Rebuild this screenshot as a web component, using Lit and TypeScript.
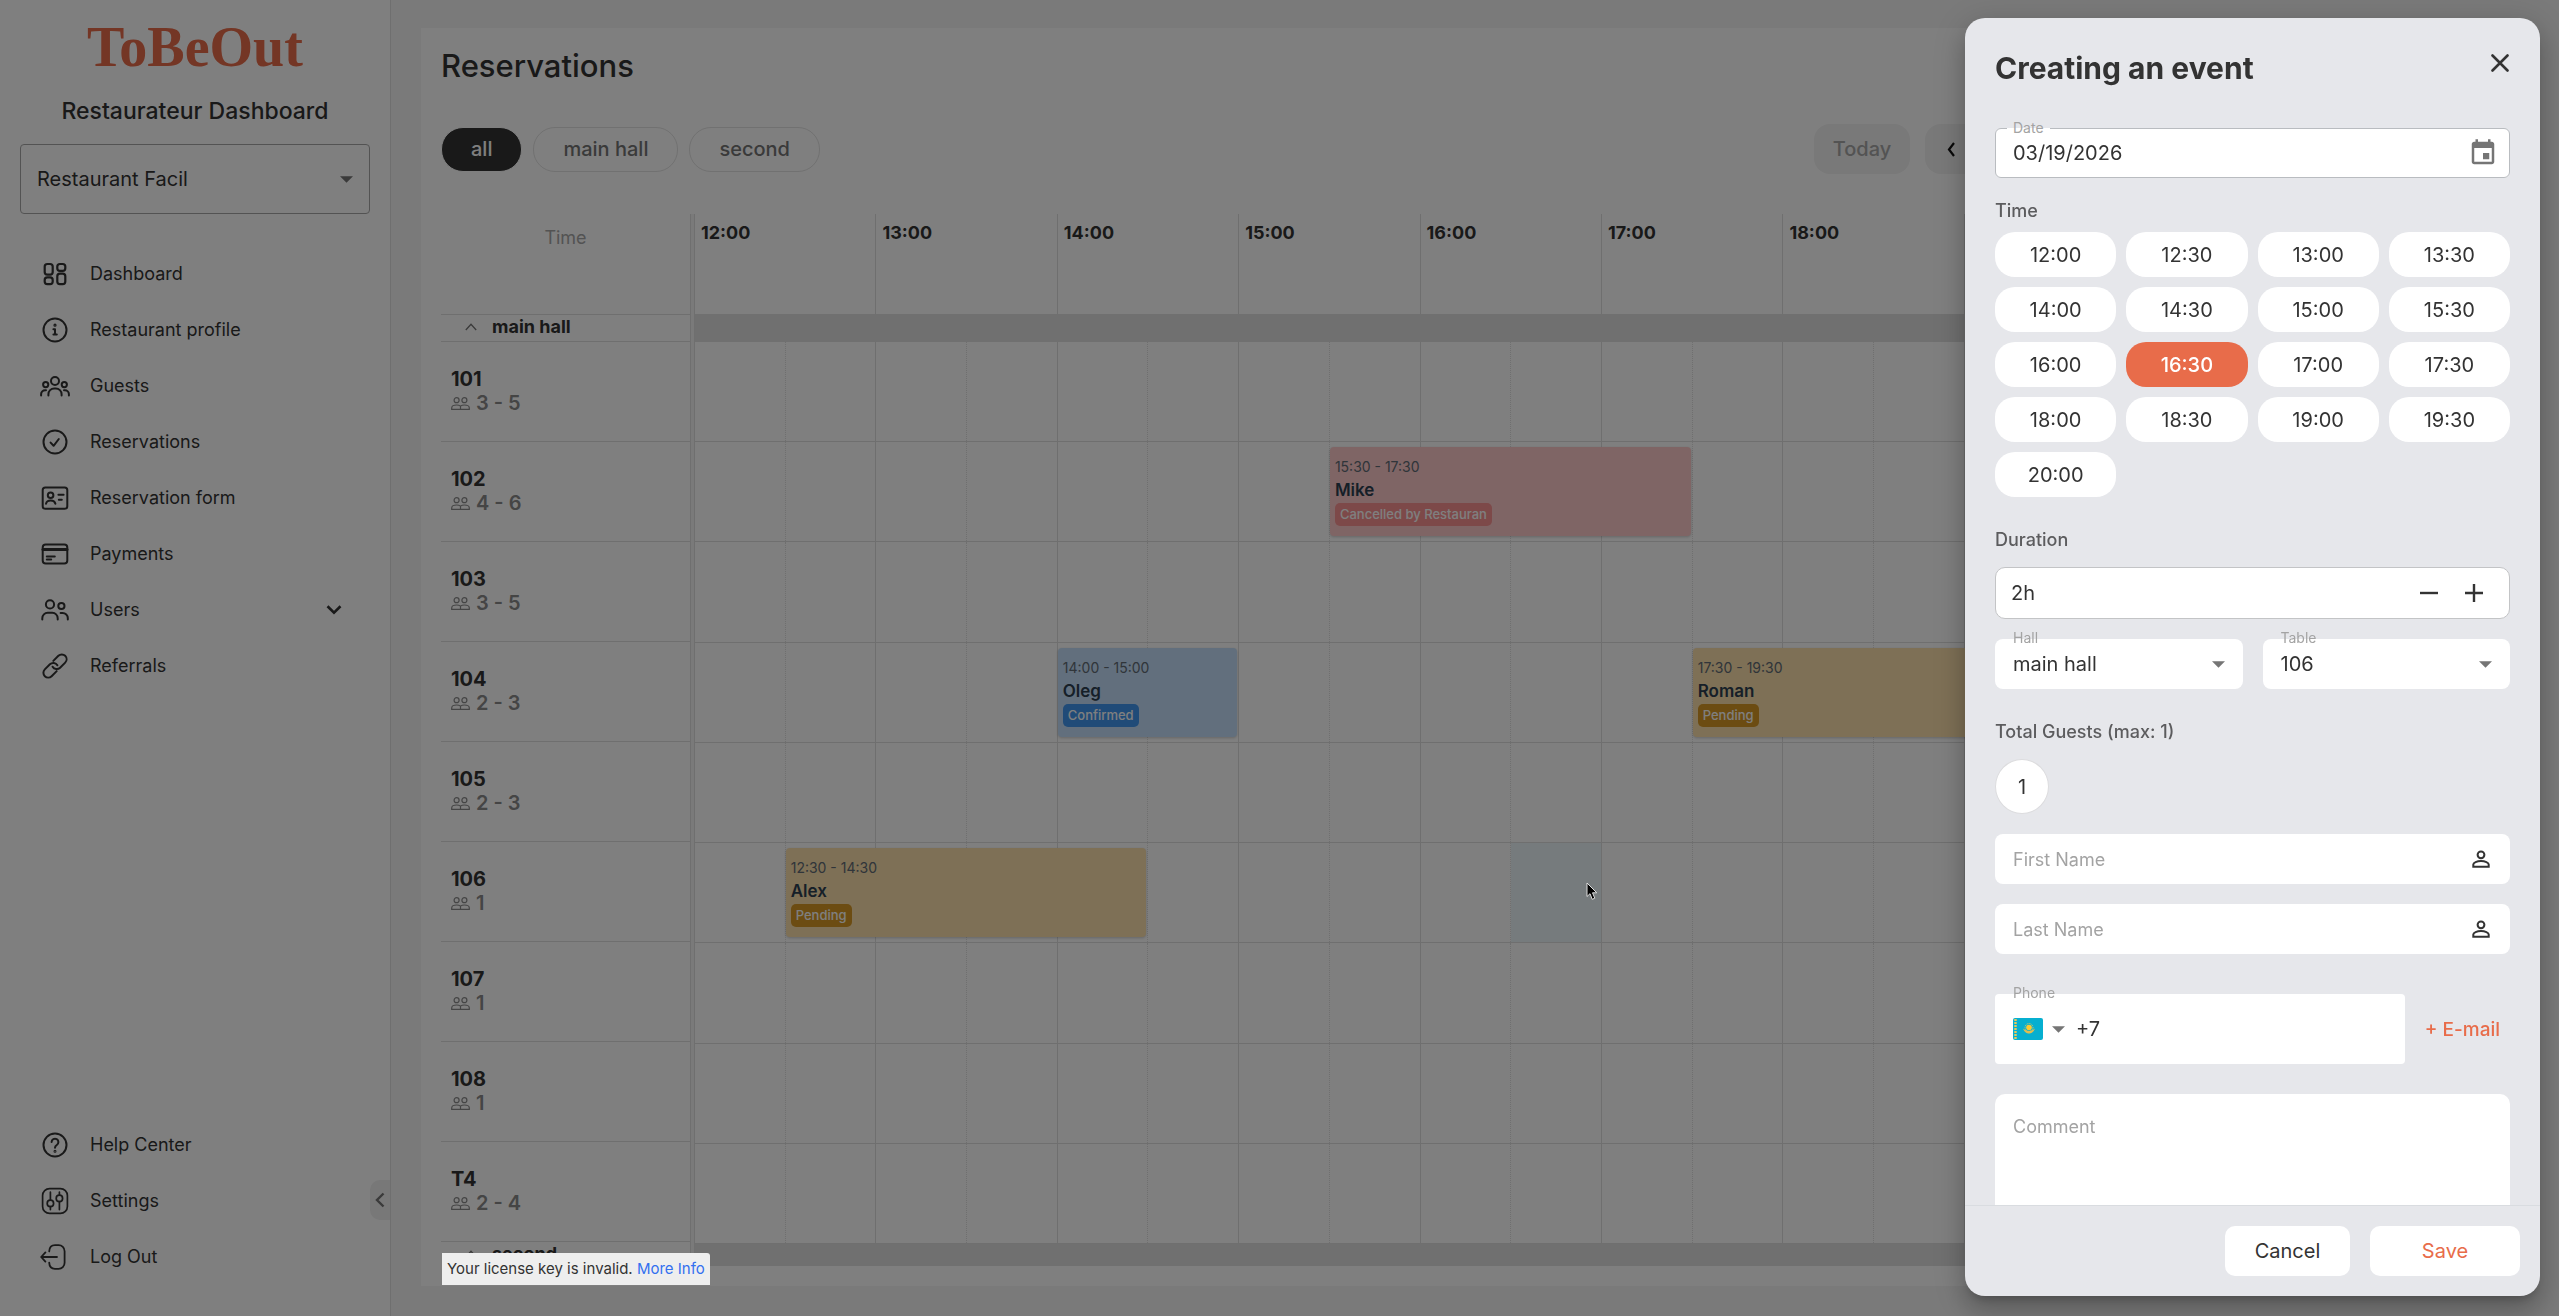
import { LitElement, html, css, svg, nothing } from "lit";
import { customElement, state } from "lit/decorators.js";
import { classMap } from "lit/directives/class-map.js";
import { styleMap } from "lit/directives/style-map.js";

const reset = css`
  *, *::before, *::after { box-sizing: border-box; }
  button, input, select, textarea {
    font: inherit; color: inherit; margin: 0; padding: 0; border: 0;
    background: none; border-radius: 0; outline: none; appearance: none;
  }
  button, select { cursor: pointer; }
  svg { display: block; flex: none; }
  a { color: inherit; text-decoration: none; }
  h1, h2, p, ul { margin: 0; padding: 0; }
  ul { list-style: none; }
`;

const caret = html`<svg class="caret" width="13" height="7" viewBox="0 0 12 6"><path d="M0 0h12L6 6z" fill="#757575" /></svg>`;

const icons: Record<string, unknown> = {
  dashboard: svg`<g stroke-width="2.2"><rect x="4.7" y="5" width="8" height="10.6" rx="2.6"/><rect x="17.3" y="5" width="8" height="6.8" rx="2.6"/><rect x="4.7" y="18.4" width="8" height="6.8" rx="2.6"/><rect x="17.3" y="14.6" width="8" height="10.6" rx="2.6"/></g>`,
  info: svg`<circle cx="15" cy="15" r="11.5"/><path d="M13.4 14.2H15V19.2M13.4 19.6h3.4"/><circle cx="15" cy="10.2" r=".6"/>`,
  guests: svg`<circle cx="15" cy="10" r="4"/><circle cx="5.7" cy="13.6" r="2.6"/><circle cx="24.3" cy="13.6" r="2.6"/><path d="M8.4 24.4v-1.2a5.8 5.8 0 0 1 5.8-5.8h1.6a5.8 5.8 0 0 1 5.8 5.8v1.2M1.1 24.4v-1.2a4 4 0 0 1 4-4h.9M28.9 24.4v-1.2a4 4 0 0 0-4-4H24"/>`,
  check: svg`<circle cx="15" cy="15" r="11.5"/><path d="M10.6 15.6l3 3.2 5.2-6.8"/>`,
  form: svg`<rect x="2.7" y="4.4" width="24.6" height="21.4" rx="2.6"/><circle cx="10.6" cy="12.2" r="2.8"/><path d="M6 20.8a4.8 4 0 0 1 9.4 0M18.4 11.8h5.2M18.8 16.8h3"/>`,
  card: svg`<rect x="2.7" y="5.4" width="24.6" height="19" rx="3"/><path d="M3 10.6h24" stroke-width="3"/><path d="M6.8 17.4h8M6.8 20.4h4.4"/>`,
  users: svg`<circle cx="10" cy="9.4" r="4.1"/><circle cx="21.4" cy="11" r="3.1"/><path d="M2.3 24.6v-1.4a5.4 5.4 0 0 1 5.4-5.4h4.6a5.4 5.4 0 0 1 5.4 5.4v1.4M20.6 17.9h2a5.2 5.2 0 0 1 5.2 5.2v1.5"/>`,
  link: svg`<g transform="rotate(-45 15 15)"><path d="M12.6 19.8H5.400a4.800 4.800 0 0 1-4.800-4.800a4.800 4.800 0 0 1 4.800-4.800h7.200a4.800 4.800 0 0 1 4.600 6"/><path d="M17.400 10.200h7.200a4.800 4.800 0 0 1 4.800 4.800a4.800 4.800 0 0 1-4.800 4.800h-7.200a4.800 4.800 0 0 1-4.600-6"/></g>`,
  help: svg`<circle cx="15" cy="15" r="11.5"/><path d="M11.6 12a3.4 3.4 0 1 1 5.2 3c-1.300.8-1.800 1.400-1.800 2.800"/><circle cx="15" cy="21.200" r=".5"/>`,
  settings: svg`<g stroke-width="1.7"><rect x="2.600" y="2.600" width="24.800" height="24.800" rx="7"/><circle cx="10.400" cy="17.400" r="3.200"/><circle cx="19.400" cy="12.400" r="3.200"/><path d="M10.400 6.200v8M10.400 20.600v3M19.400 6.200v3M19.400 15.600v8"/></g>`,
  logout: svg`<g stroke-width="1.800"><path d="M1.200 15H17M5.400 10.400L1.200 15l4.200 4.600"/><path d="M9.200 9.400C9.400 5.200 11.400 3.200 15 3.200h3.600a6 6 0 0 1 6 6v11.600a6 6 0 0 1-6 6H15c-3.600 0-5.600-2-5.800-6.200"/></g>`,
};

const icon = (name: string) => html`<svg class="icon" width="30" height="30" viewBox="0 0 30 30" fill="none"
  stroke="currentColor" stroke-width="2" stroke-linecap="round" stroke-linejoin="round" aria-hidden="true">${icons[name]}</svg>`;

@customElement("side-bar")
class SideBar extends LitElement {
  static styles = [reset, css`
    :host {
      position: relative; display: flex; flex-direction: column; background: #fff;
      border-right: 1px solid #dfdfdf; padding: 15px 20px 31px; color: #333;
    }
    .logo {
      font: bold 56px/64px "Liberation Serif", "Times New Roman", serif;
      color: #e86c4a; text-align: center;
    }
    .tagline { margin-top: 16px; font-size: 23px; line-height: 32px; font-weight: 500; text-align: center; white-space: nowrap; }
    .venue { position: relative; margin-top: 17px; }
    .venue select { width: 100%; height: 70px; border: 1px solid #a6a6a6; border-radius: 4px; padding: 0 44px 0 16px; font-size: 20px; }
    .caret { position: absolute; right: 17px; top: 32px; pointer-events: none; }
    .menu { margin-top: 32px; }
    .bottom { margin-top: auto; }
    .item { display: flex; align-items: center; gap: 20px; height: 56px; padding: 0 20px; font-size: 18px; line-height: 24px; }
    .more { margin: 0 8px 0 auto; }
    .collapse {
      position: absolute; right: 0; bottom: 96px; width: 20px; height: 40px;
      display: grid; place-items: center; background: #f0f0f0; border-radius: 10px 0 0 10px;
    }
  `];

  private main = [
    ["dashboard", "Dashboard"], ["info", "Restaurant profile"], ["guests", "Guests"], ["check", "Reservations"],
    ["form", "Reservation form"], ["card", "Payments"], ["users", "Users"], ["link", "Referrals"],
  ];
  private extra = [["help", "Help Center"], ["settings", "Settings"], ["logout", "Log Out"]];

  private item([name, label]: string[]) {
    return html`<li><a class="item" href="#">${icon(name)}<span>${label}</span>
      ${name === "users"
        ? html`<svg class="more" width="16" height="10" viewBox="0 0 16 10" fill="none" stroke="currentColor" stroke-width="2.600"><path d="M1.500 1.200L8 7.600l6.500-6.400"/></svg>`
        : nothing}</a></li>`;
  }

  render() {
    return html`
      <div class="logo">ToBeOut</div>
      <p class="tagline">Restaurateur Dashboard</p>
      <div class="venue">
        <select aria-label="Restaurant"><option>Restaurant Facil</option></select>${caret}
      </div>
      <ul class="menu">${this.main.map((i) => this.item(i))}</ul>
      <ul class="bottom">${this.extra.map((i) => this.item(i))}</ul>
      <button class="collapse" aria-label="Collapse">
        <svg width="10" height="16" viewBox="0 0 10 16" fill="none" stroke="#757575" stroke-width="2.400"><path d="M8.500 1.500L2 8l6.500 6.500"/></svg>
      </button>`;
  }
}

interface Booking { start: number; slots: number; time: string; name: string; status: string; tone: string; }
interface Table { id: string; seats: string; bookings?: Booking[]; selected?: number; }

const tables: Table[] = [
  { id: "101", seats: "3 - 5" },
  { id: "102", seats: "4 - 6", bookings: [{ start: 8, slots: 4, time: "15:30 - 17:30", name: "Mike", status: "Cancelled by Restauran", tone: "cancelled" }] },
  { id: "103", seats: "3 - 5" },
  {
    id: "104", seats: "2 - 3", bookings: [
      { start: 5, slots: 2, time: "14:00 - 15:00", name: "Oleg", status: "Confirmed", tone: "confirmed" },
      { start: 12, slots: 4, time: "17:30 - 19:30", name: "Roman", status: "Pending", tone: "pending" },
    ],
  },
  { id: "105", seats: "2 - 3" },
  { id: "106", seats: "1", selected: 10, bookings: [{ start: 2, slots: 4, time: "12:30 - 14:30", name: "Alex", status: "Pending", tone: "pending" }] },
  { id: "107", seats: "1" },
  { id: "108", seats: "1" },
  { id: "T4", seats: "2 - 4" },
];

@customElement("booking-scheduler")
class BookingScheduler extends LitElement {
  static styles = [reset, css`
    :host { display: grid; grid-template-columns: 249px 5px 1fr; min-height: 0; overflow: hidden; color: #333; }
    .resources { display: flex; flex-direction: column; min-height: 0; overflow: hidden; }
    .corner { flex: none; height: 100px; padding-top: 12px; text-align: center; font-size: 18px; line-height: 24px; color: #a6a6a6; }
    .group {
      flex: none; height: 28px; display: flex; align-items: center; gap: 15px; padding: 0 0 3px 24px;
      border-top: 1px solid #dfdfdf; border-bottom: 1px solid #dfdfdf; font-size: 18px; line-height: 22px; font-weight: 700;
    }
    .resource { flex: none; height: 100px; border-bottom: 1px solid #dfdfdf; padding: 25px 10px 0; font-size: 20px; line-height: 24px; }
    .resource + .group { border-top: 0; }
    .id { font-weight: 700; }
    .seats { display: flex; align-items: center; gap: 6px; font-weight: 600; color: #8a8a8a; }
    .divider { background: #f4f4f4; border: 1px solid #dfdfdf; border-width: 0 1px; }
    .timeline { display: grid; grid-template-rows: 100px 28px repeat(9, minmax(0, 1fr)) 22px; min-height: 0; }
    .hours { display: grid; grid-template-columns: repeat(10, 1fr); }
    .hour { border-right: 1px solid #dfdfdf; padding: 7px 6px; font-size: 18px; line-height: 24px; font-weight: 700; }
    .band { background: #e0e0e0; }
    .lane { display: grid; grid-template-columns: repeat(20, 1fr); grid-template-rows: 100%; border-bottom: 1px solid #dfdfdf; min-height: 0; }
    .cell { grid-row: 1; border-right: 1px dotted #dfdfdf; }
    .cell.full { border-right-style: solid; }
    .cell.selected { background: #ecf6fa; }
    .booking {
      grid-row: 1; margin: 5px 2px 5px 0; padding: 9px 5px 0; border-radius: 4px; overflow: hidden;
      display: flex; flex-direction: column; align-items: flex-start; box-shadow: 0 1px 3px rgba(0, 0, 0, .2); white-space: nowrap;
    }
    .when { font-size: 14px; line-height: 22px; color: #606a74; }
    .who { font-size: 17px; line-height: 24px; font-weight: 600; color: #2c3e50; }
    .status { margin-top: 1px; height: 23px; padding: 0 5px; border-radius: 5px; font-size: 13px; line-height: 22px; font-weight: 500; color: #fff; }
    .cancelled { background: #ffcbcb; }
    .cancelled .status { background: #fa9292; }
    .confirmed { background: #c4dffa; }
    .confirmed .status { background: #4096f0; }
    .pending { background: #fde0ac; }
    .pending .status { background: #d89824; }
  `];

  private group(name: string) {
    return html`<div class="group">
      <svg width="12" height="8" viewBox="0 0 12 8" fill="none" stroke="#757575" stroke-width="1.300"><path d="M.8 7L6 1.200 11.200 7"/></svg>
      <span>${name}</span></div>`;
  }

  render() {
    const hours = Array.from({ length: 7 }, (_, i) => `${12 + i}:00`);
    const slots = Array.from({ length: 20 }, (_, i) => i + 1);
    return html`
      <div class="resources">
        <div class="corner">Time</div>
        ${this.group("main hall")}
        ${tables.map((t) => html`<div class="resource">
          <div class="id">${t.id}</div>
          <div class="seats">
            <svg width="19" height="13" viewBox="0 0 19 13" fill="none" stroke="currentColor" stroke-width="1.200">
              <circle cx="5.600" cy="3.200" r="2.500"/><circle cx="13.400" cy="3.200" r="2.500"/>
              <path d="M.7 12.300V11c0-1.700 1.800-3 4.900-3 1.700 0 3 .4 3.900 1.100.9-.7 2.200-1.100 3.900-1.100 3.100 0 4.900 1.300 4.900 3v1.300zM9.500 9.100v3"/>
            </svg>${t.seats}
          </div></div>`)}
        ${this.group("second")}
      </div>
      <div class="divider"></div>
      <div class="timeline">
        <div class="hours">${hours.map((h) => html`<div class="hour">${h}</div>`)}</div>
        <div class="band"></div>
        ${tables.map((t) => html`<div class="lane">
          ${slots.map((n) => html`<div class=${classMap({ cell: true, full: n % 2 === 0, selected: t.selected === n })}
            style=${styleMap({ gridColumn: `${n}` })}></div>`)}
          ${(t.bookings ?? []).map((b) => html`<div class="booking ${b.tone}" style=${styleMap({ gridColumn: `${b.start} / span ${b.slots}` })}>
            <div class="when">${b.time}</div><div class="who">${b.name}</div><div class="status">${b.status}</div>
          </div>`)}
        </div>`)}
        <div class="band"></div>
      </div>`;
  }
}

@customElement("event-drawer")
class EventDrawer extends LitElement {
  static styles = [reset, css`
    :host {
      position: fixed; top: 18px; right: 19px; bottom: 20px; width: 575px; display: flex; flex-direction: column;
      background: #e6e7eb; border-radius: 20px; overflow: hidden; color: #333; font-size: 20px;
      box-shadow: 0 8px 10px -5px rgba(0, 0, 0, .2), 0 16px 24px 2px rgba(0, 0, 0, .14), 0 6px 30px 5px rgba(0, 0, 0, .12);
    }
    .head { flex: none; display: flex; justify-content: space-between; align-items: flex-start; padding: 30px 30px 0; }
    .head h2 { font-size: 30px; line-height: 40px; font-weight: 700; }
    .close { width: 20px; height: 30px; display: grid; place-items: center; }
    .form { flex: 1; min-height: 0; overflow: auto; scrollbar-width: none; padding: 40px 30px 0; }
    .field { position: relative; display: flex; align-items: center; height: 50px; background: #fff; border-radius: 8px; padding: 0 18px; }
    .field input, .field select { flex: 1; min-width: 0; height: 100%; }
    .float { position: absolute; left: 18px; top: -10px; font-size: 14px; line-height: 18px; color: #a3a3a3; }
    .outlined { border: 1px solid #b9bcc0; border-radius: 6px; padding: 0 11px 0 17px; }
    .outlined .float { left: 11px; padding: 0 6px; background: linear-gradient(#e6e7eb 9px, #fff 9px); }
    .caption { display: block; padding-top: 2px; font-size: 18px; line-height: 22px; font-weight: 500; color: #5c5c5e; }
    .stack { margin-top: 20px; }
    .section { margin-top: 30px; }
    .times { display: grid; grid-template-columns: repeat(4, 1fr); gap: 10px; margin-top: 10px; }
    .time { height: 45px; border-radius: 20px; background: #fff; }
    .time.on { background: #e86c4a; color: #fff; font-weight: 500; }
    .duration { height: 52px; margin-top: 16px; border-radius: 10px; border: 1px solid #c3c4c6; padding: 0 15px; gap: 5px; }
    .step { width: 30px; height: 30px; display: grid; place-items: center; }
    .step + .step { margin: 0 5px 0 10px; }
    .pair { display: grid; grid-template-columns: 1fr 1fr; gap: 20px; }
    .caret { pointer-events: none; }
    .pair .field { padding-right: 0; }
    .pair select { padding-right: 36px; margin-right: -36px; }
    .pair .caret { margin-right: 18px; }
    .guest { width: 54px; height: 55px; margin-top: 16px; border-radius: 50%; background: #fff; border: 1px solid #dcdcde; display: block; }
    input::placeholder, textarea::placeholder { color: #a3a3a3; opacity: 1; font-size: 18px; }
    .person { margin: 0 2px; }
    .contact { display: grid; grid-template-columns: minmax(0, 1fr) auto; gap: 20px; align-items: center; margin-top: 40px; padding-right: 10px; }
    .contact .field { height: 70px; border-radius: 4px; gap: 11px; }
    .country { display: flex; align-items: center; gap: 9px; height: 30px; }
    .email { color: #e86c4a; font-size: 19px; font-weight: 500; height: 40px; white-space: nowrap; }
    .comment { display: block; width: 100%; height: 160px; margin-top: 30px; border-radius: 10px; background: #fff; padding: 19px 18px; line-height: 28px; resize: none; }
    .foot { flex: none; display: flex; justify-content: flex-end; gap: 20px; padding: 20px; border-top: 1px solid #d9dce0; }
    .foot button { height: 50px; background: #fff; border-radius: 10px; }
    .cancel { width: 125px; }
    .save { width: 150px; color: #e86c4a; }
  `];

  @state() private selected = "16:30";
  @state() private hours = 2;

  private times = Array.from({ length: 17 }, (_, i) => `${12 + Math.floor(i / 2)}:${i % 2 ? "30" : "00"}`);

  private nameField(id: string, label: string) {
    return html`<div class="field stack">
      <input id=${id} type="text" placeholder=${label} aria-label=${label} />
      <svg class="person" width="18" height="18" viewBox="0 0 18 18" fill="none" stroke="currentColor" stroke-width="2">
        <circle cx="9" cy="4.800" r="3.400"/><path d="M1.300 16.800v-2.200c0-2 3.600-3.600 7.700-3.600s7.700 1.600 7.700 3.600v2.200z"/>
      </svg></div>`;
  }

  render() {
    return html`
      <div class="head">
        <h2>Creating an event</h2>
        <button class="close" aria-label="Close">
          <svg width="18" height="18" viewBox="0 0 18 18" fill="none" stroke="currentColor" stroke-width="2.600" stroke-linecap="round"><path d="M1.500 1.500l15 15M16.500 1.500l-15 15"/></svg>
        </button>
      </div>
      <div class="form">
        <div class="field outlined">
          <label class="float" for="date">Date</label>
          <input id="date" type="text" value="03/19/2026" />
          <button aria-label="Choose date">
            <svg width="30" height="30" viewBox="0 0 24 24" fill="#757575"><path d="M17 12h-5v5h5v-5zM16 1v2H8V1H6v2H5c-1.110 0-1.990.9-1.990 2L3 19c0 1.100.89 2 2 2h14c1.100 0 2-.9 2-2V5c0-1.100-.9-2-2-2h-1V1h-2zm3 18H5V8h14v11z"/></svg>
          </button>
        </div>
        <div class="caption stack">Time</div>
        <div class="times">${this.times.map((t) => html`<button class=${classMap({ time: true, on: t === this.selected })}
          @click=${() => (this.selected = t)}>${t}</button>`)}</div>
        <label class="caption section" for="duration">Duration</label>
        <div class="field duration">
          <input id="duration" type="text" readonly .value=${`${this.hours}h`} />
          <button class="step" aria-label="Shorter" @click=${() => (this.hours = Math.max(1, this.hours - 1))}>
            <svg width="18" height="18" viewBox="0 0 18 18" stroke="currentColor" stroke-width="2.400"><path d="M0 9h18"/></svg>
          </button>
          <button class="step" aria-label="Longer" @click=${() => (this.hours += 1)}>
            <svg width="18" height="18" viewBox="0 0 18 18" stroke="currentColor" stroke-width="2.400"><path d="M0 9h18M9 0v18"/></svg>
          </button>
        </div>
        <div class="pair stack">
          <div class="field"><label class="float" for="hall">Hall</label><select id="hall"><option>main hall</option></select>${caret}</div>
          <div class="field"><label class="float" for="table">Table</label><select id="table"><option>106</option></select>${caret}</div>
        </div>
        <div class="caption section">Total Guests (max: 1)</div>
        <button class="guest">1</button>
        ${this.nameField("first", "First Name")}
        ${this.nameField("last", "Last Name")}
        <div class="contact">
          <div class="field">
            <label class="float" for="phone">Phone</label>
            <button class="country" aria-label="Country">
              <svg width="30" height="22" viewBox="0 0 30 22"><rect width="30" height="22" rx="2" fill="#06afd0"/>
                <path d="M2.500 1v20" stroke="#e8c95a" stroke-width="2.400" stroke-dasharray="2 1"/>
                <circle cx="16" cy="9.500" r="2.800" fill="#fec92f"/><circle cx="16" cy="9.500" r="4" fill="none" stroke="#e8c95a" stroke-width="1" stroke-dasharray="1 1"/>
                <path d="M10 10.500c1.500 4 4 5 6 5s4.500-1 6-5c-2 1.500-4 2.500-6 2.500s-4-1-6-2.500z" fill="#e0bd50"/></svg>
              ${caret}
            </button>
            <input id="phone" type="tel" value="+7" />
          </div>
          <button class="email">+ E-mail</button>
        </div>
        <textarea class="comment" placeholder="Comment" aria-label="Comment"></textarea>
      </div>
      <div class="foot">
        <button class="cancel">Cancel</button>
        <button class="save">Save</button>
      </div>`;
  }
}

@customElement("app-root")
class AppRoot extends LitElement {
  static styles = [reset, css`
    :host {
      position: relative; display: grid; grid-template-columns: 391px minmax(0, 1fr); height: 100vh; overflow: hidden;
      background: #f4f4f4; color: #333; font-family: Inter, "Liberation Sans", sans-serif;
    }
    .page { display: flex; min-height: 0; padding: 28px 30px 30px; }
    .card { flex: 1; min-width: 0; min-height: 0; display: flex; flex-direction: column; background: #fff; padding: 20px; }
    h1 { font-size: 31px; line-height: 36px; font-weight: 500; }
    .toolbar { flex: none; display: flex; justify-content: space-between; align-items: center; height: 50px; margin: 40px 0; font-size: 20px; }
    .halls { display: flex; gap: 11px; }
    .pill { height: 45px; padding: 0 29px; border: 1px solid #e2e2e2; border-radius: 22px; font-weight: 500; color: #757575; }
    .pill.on { background: #333; border-color: #fff; color: #fff; }
    .dates { display: grid; grid-template-columns: 96px 1fr; gap: 15px; width: 695px; }
    .today, .range { height: 50px; border-radius: 16px; background: #f2f2f2; }
    .today { color: #a6a6a6; font-weight: 500; }
    .range { display: flex; align-items: center; }
    .prev { width: 52px; height: 50px; display: grid; place-items: center; }
    booking-scheduler { flex: 1; }
    .backdrop { position: absolute; inset: 0; background: rgba(0, 0, 0, .5); }
    .licence {
      position: absolute; left: 442px; bottom: 31px; height: 32px; padding: 0 5px; background: #eee;
      border-radius: 0 3px 0 0; font-size: 15px; line-height: 32px; white-space: nowrap;
    }
    .licence a { color: #3370f0; }
    .pointer { position: absolute; left: 1586px; top: 882px; }
  `];

  render() {
    return html`
      <side-bar></side-bar>
      <main class="page">
        <section class="card">
          <h1>Reservations</h1>
          <div class="toolbar">
            <div class="halls">
              <button class="pill on">all</button>
              <button class="pill">main hall</button>
              <button class="pill">second</button>
            </div>
            <div class="dates">
              <button class="today" disabled>Today</button>
              <div class="range"><button class="prev" aria-label="Previous day">
                <svg width="9" height="15" viewBox="0 0 9 15" fill="none" stroke="#111" stroke-width="2.200"><path d="M7 1L2 7.500 7 14"/></svg>
              </button></div>
            </div>
          </div>
          <booking-scheduler></booking-scheduler>
        </section>
      </main>
      <div class="backdrop"></div>
      <p class="licence">Your license key is invalid. <a href="#">More Info</a></p>
      <svg class="pointer" width="12" height="19" viewBox="0 0 12 19"><path d="M1 1v13.500l3-2.800 2.200 5.600 2.600-1.100-2.300-5.400h4.300z" fill="#000" stroke="#ddd" stroke-width="1"/></svg>
      <event-drawer></event-drawer>`;
  }
}
